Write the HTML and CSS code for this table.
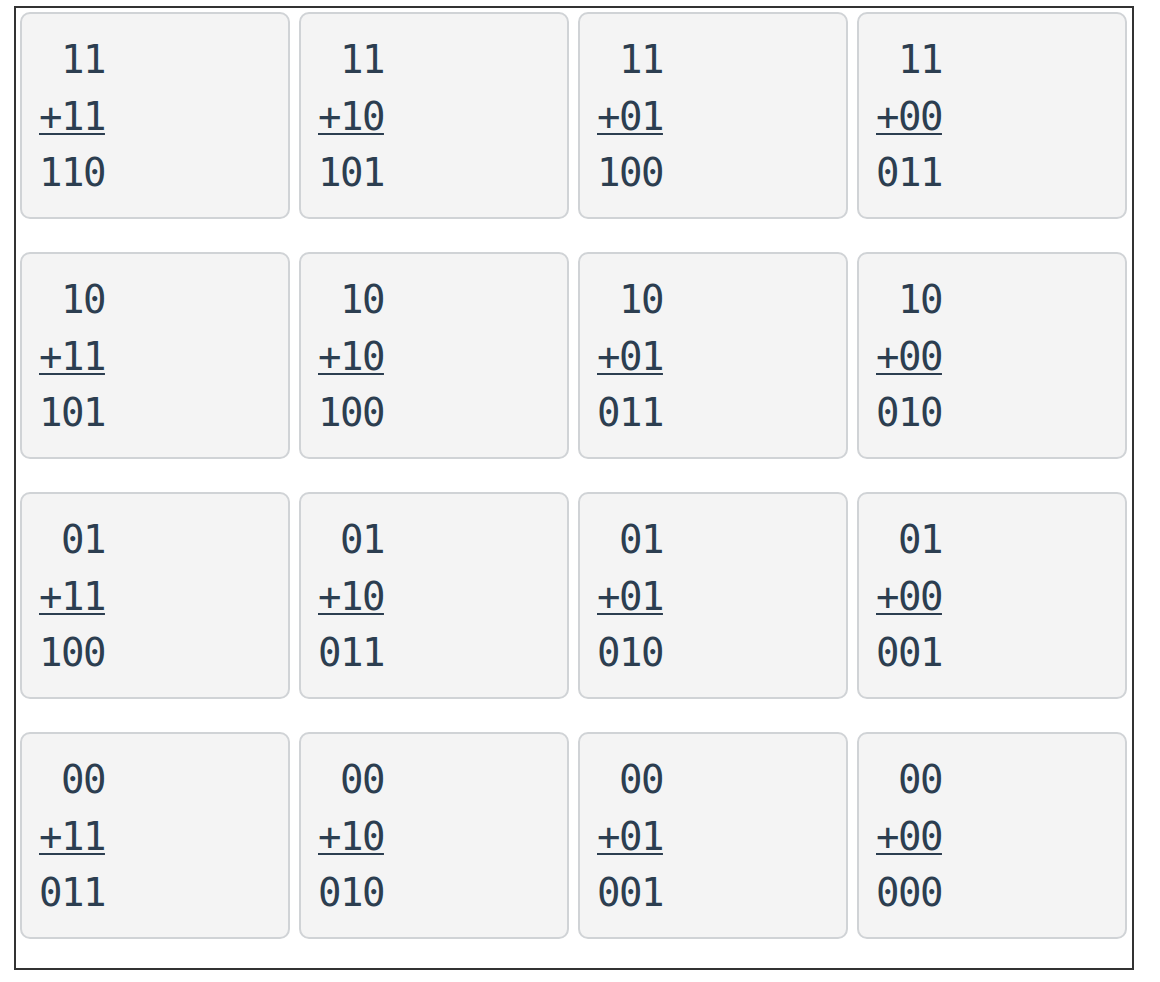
FILE: index.html
```html
<!DOCTYPE html>
<html>
<head>
<meta charset="utf-8">
<link rel="stylesheet" href="styles.css">
</head>
<body>
<div class="board">
  <div class="card"><div class="ln"> 11</div><div class="ln"><span class="u">+11</span></div><div class="ln">110</div></div>
  <div class="card"><div class="ln"> 11</div><div class="ln"><span class="u">+10</span></div><div class="ln">101</div></div>
  <div class="card"><div class="ln"> 11</div><div class="ln"><span class="u">+01</span></div><div class="ln">100</div></div>
  <div class="card"><div class="ln"> 11</div><div class="ln"><span class="u">+00</span></div><div class="ln">011</div></div>

  <div class="card"><div class="ln"> 10</div><div class="ln"><span class="u">+11</span></div><div class="ln">101</div></div>
  <div class="card"><div class="ln"> 10</div><div class="ln"><span class="u">+10</span></div><div class="ln">100</div></div>
  <div class="card"><div class="ln"> 10</div><div class="ln"><span class="u">+01</span></div><div class="ln">011</div></div>
  <div class="card"><div class="ln"> 10</div><div class="ln"><span class="u">+00</span></div><div class="ln">010</div></div>

  <div class="card"><div class="ln"> 01</div><div class="ln"><span class="u">+11</span></div><div class="ln">100</div></div>
  <div class="card"><div class="ln"> 01</div><div class="ln"><span class="u">+10</span></div><div class="ln">011</div></div>
  <div class="card"><div class="ln"> 01</div><div class="ln"><span class="u">+01</span></div><div class="ln">010</div></div>
  <div class="card"><div class="ln"> 01</div><div class="ln"><span class="u">+00</span></div><div class="ln">001</div></div>

  <div class="card"><div class="ln"> 00</div><div class="ln"><span class="u">+11</span></div><div class="ln">011</div></div>
  <div class="card"><div class="ln"> 00</div><div class="ln"><span class="u">+10</span></div><div class="ln">010</div></div>
  <div class="card"><div class="ln"> 00</div><div class="ln"><span class="u">+01</span></div><div class="ln">001</div></div>
  <div class="card"><div class="ln"> 00</div><div class="ln"><span class="u">+00</span></div><div class="ln">000</div></div>
</div>
</body>
</html>
```

FILE: styles.css
```css
html, body {
  margin: 0;
  padding: 0;
  background: #ffffff;
}
body {
  padding: 6px 0 0 14px;
}
.board {
  box-sizing: border-box;
  width: 1120px;
  height: 964px;
  border: 2px solid #333333;
  padding: 4px 5px 29px 4px;
  display: grid;
  grid-template-columns: repeat(4, 1fr);
  grid-auto-rows: 207px;
  column-gap: 9px;
  row-gap: 33px;
}
.card {
  box-sizing: border-box;
  background: #f4f4f4;
  border: 2px solid #d0d3d6;
  border-radius: 10px;
  padding: 18px 16px 0 17px;
  font-family: "DejaVu Sans Mono", monospace;
  font-size: 39px;
  font-variant-numeric: slashed-zero;
  letter-spacing: -1.5px;
  line-height: 56.5px;
  color: #2c3e50;
  white-space: pre;
}
.u {
  text-decoration: underline;
  text-decoration-thickness: 2px;
  text-underline-offset: 3px;
}
```
